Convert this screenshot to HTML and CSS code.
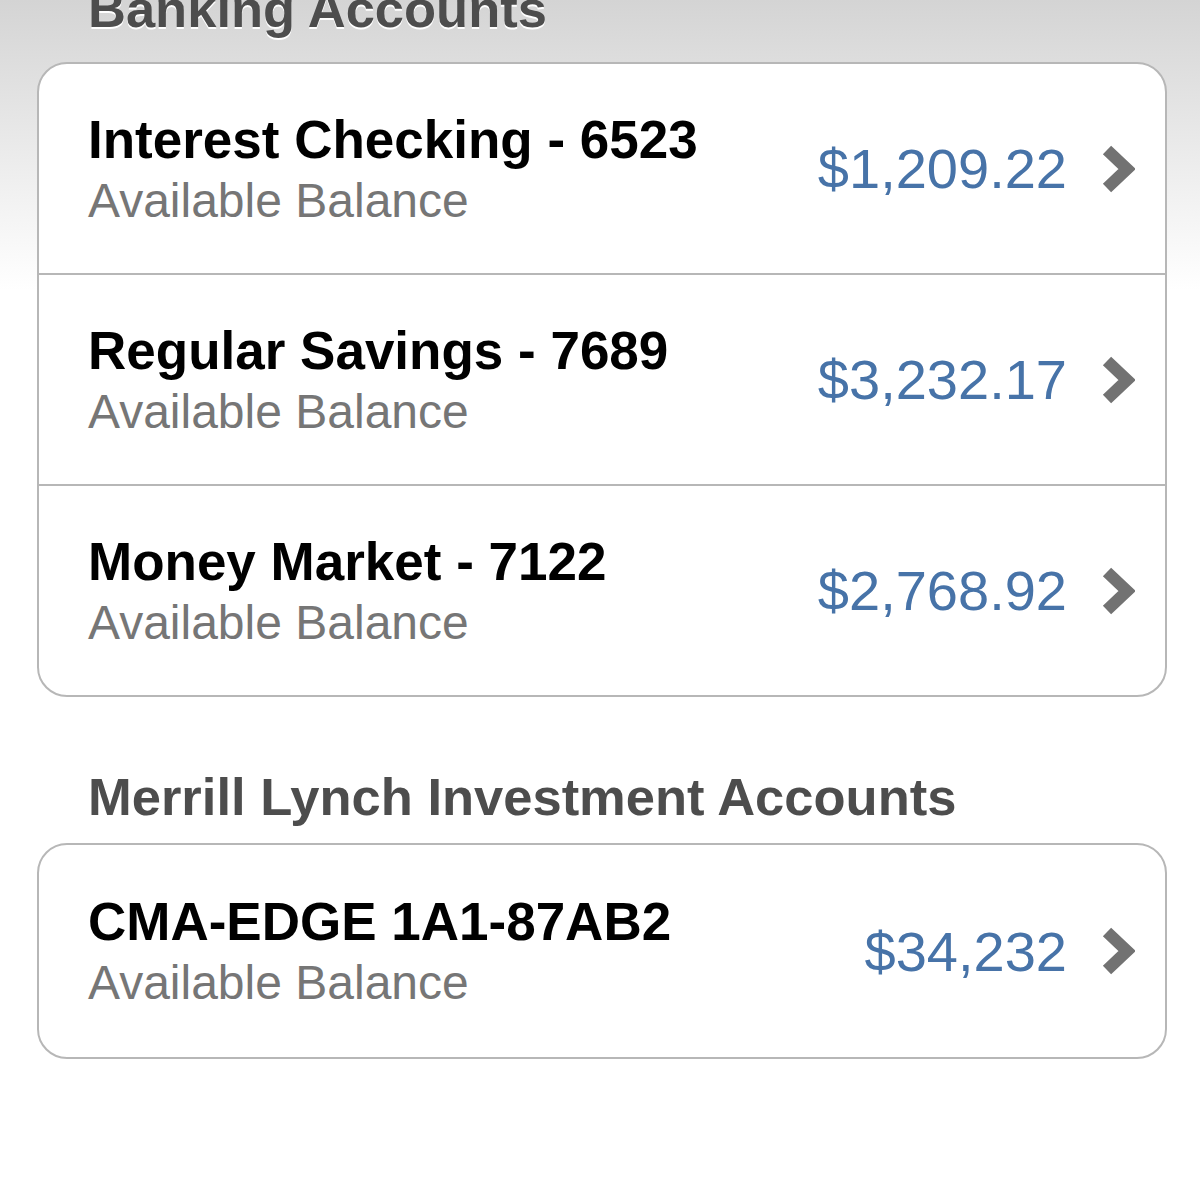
FILE: index.html
```html
<!DOCTYPE html>
<html lang="en">
<head>
    <meta charset="UTF-8">
    <meta name="viewport" content="width=device-width, initial-scale=1.0">
    <title>Accounts</title>
    <link rel="stylesheet" href="styles.css">
</head>
<body>
    <div class="container">
        <h2 class="group-title first">Banking Accounts</h2>
        <div class="card">
            <div class="row">
                <div class="info">
                    <div class="name">Interest Checking - 6523</div>
                    <div class="label">Available Balance</div>
                </div>
                <div class="amount">$1,209.22</div>
                <svg class="chevron" viewBox="0 0 34 48"><polyline points="6,5 26,24 6,43"/></svg>
            </div>
            <div class="row">
                <div class="info">
                    <div class="name">Regular Savings - 7689</div>
                    <div class="label">Available Balance</div>
                </div>
                <div class="amount">$3,232.17</div>
                <svg class="chevron" viewBox="0 0 34 48"><polyline points="6,5 26,24 6,43"/></svg>
            </div>
            <div class="row">
                <div class="info">
                    <div class="name">Money Market - 7122</div>
                    <div class="label">Available Balance</div>
                </div>
                <div class="amount">$2,768.92</div>
                <svg class="chevron" viewBox="0 0 34 48"><polyline points="6,5 26,24 6,43"/></svg>
            </div>
        </div>

        <h2 class="group-title">Merrill Lynch Investment Accounts</h2>
        <div class="card">
            <div class="row">
                <div class="info">
                    <div class="name">CMA-EDGE 1A1-87AB2</div>
                    <div class="label">Available Balance</div>
                </div>
                <div class="amount">$34,232</div>
                <svg class="chevron" viewBox="0 0 34 48"><polyline points="6,5 26,24 6,43"/></svg>
            </div>
        </div>
    </div>
</body>
</html>
```

FILE: styles.css
```css
html { background: #fff; }
body { margin: 0; padding: 0; min-height: 1200px; font-family: "Liberation Sans", Arial, Helvetica, sans-serif; background: linear-gradient(#d4d4d4 0, #f2f2f2 200px, #fff 290px) no-repeat; overflow: hidden; }
.container { padding: 0 33px 0 37px; }
.group-title { margin: 70px 0 16px; padding-left: 51px; font-size: 52.5px; line-height: 60px; font-weight: bold; color: #4d4d4d; text-shadow: 0 2px 0 #fff; }
.group-title.first { margin-top: -21px; margin-bottom: 23px; }
.card { background: #fff; border: 2px solid #b7b7b7; border-radius: 30px; overflow: hidden; }
.row { display: flex; align-items: center; height: 209px; padding: 0 30px 0 49px; border-top: 2px solid #b7b7b7; }
.row:first-child { border-top: none; }
.card .row:only-child { height: 212px; }
.info { flex: 1; padding-top: 3px; }
.name { font-size: 53px; line-height: 56px; font-weight: bold; color: #000; }
.label { margin-top: 5px; font-size: 48px; line-height: 56px; color: #767676; }
.amount { font-size: 56px; color: #4773a8; margin-right: 34px; }
.chevron { width: 34px; height: 48px; }
.chevron polyline { fill: none; stroke: #727272; stroke-width: 12; stroke-linejoin: miter; }
```
